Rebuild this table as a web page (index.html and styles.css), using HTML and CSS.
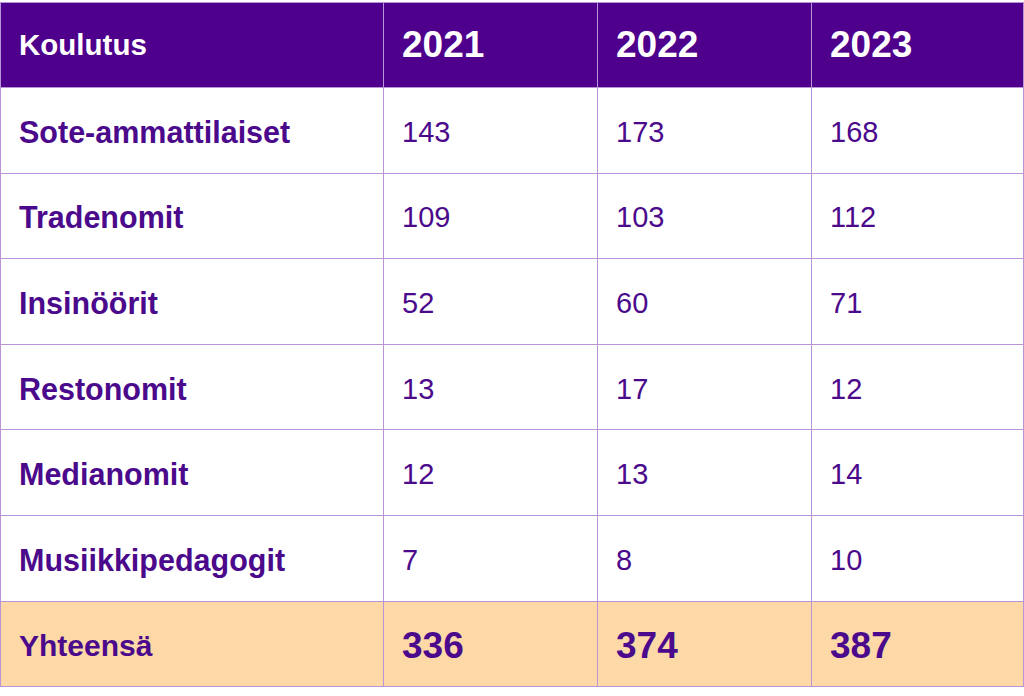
FILE: index.html
```html
<!DOCTYPE html>
<html lang="fi">
<head>
<meta charset="utf-8">
<title>Koulutus</title>
<link rel="stylesheet" href="styles.css">
</head>
<body>
<div class="page">
<table class="stats">
  <colgroup>
    <col class="c-label">
    <col class="c-year">
    <col class="c-year">
    <col class="c-year-last">
  </colgroup>
  <thead>
    <tr class="head">
      <th class="label">Koulutus</th>
      <th class="year">2021</th>
      <th class="year">2022</th>
      <th class="year">2023</th>
    </tr>
  </thead>
  <tbody>
    <tr><th class="label">Sote-ammattilaiset</th><td>143</td><td>173</td><td>168</td></tr>
    <tr><th class="label">Tradenomit</th><td>109</td><td>103</td><td>112</td></tr>
    <tr><th class="label">Insinöörit</th><td>52</td><td>60</td><td>71</td></tr>
    <tr><th class="label">Restonomit</th><td>13</td><td>17</td><td>12</td></tr>
    <tr><th class="label">Medianomit</th><td>12</td><td>13</td><td>14</td></tr>
    <tr><th class="label">Musiikkipedagogit</th><td>7</td><td>8</td><td>10</td></tr>
    <tr class="total"><th class="label">Yhteensä</th><td>336</td><td>374</td><td>387</td></tr>
  </tbody>
</table>
</div>
</body>
</html>
```
FILE: styles.css
```css
html, body {
  margin: 0;
  padding: 0;
  background: #ffffff;
}

.page {
  padding-top: 2px;
  width: 1024px;
}

.stats {
  width: 1023px;
  border-collapse: collapse;
  table-layout: fixed;
  font-family: "Liberation Sans", Arial, sans-serif;
  color: #4b0a8c;
}

.c-label { width: 383px; }
.c-year { width: 214px; }
.c-year-last { width: 212px; }

.stats th,
.stats td {
  border: 1px solid #b994d9;
  height: 85.6px;
  padding: 4px 0 0 18px;
  text-align: left;
  vertical-align: middle;
  box-sizing: border-box;
}

.stats td {
  font-size: 29px;
  font-weight: 400;
}

.stats th.label {
  font-size: 30.5px;
  font-weight: 700;
}

.head th {
  height: 85px;
  background: #4e008c;
  color: #ffffff;
  padding-top: 0;
}

.head th.label {
  font-size: 29.5px;
}

.head th.year {
  font-size: 37px;
  font-weight: 700;
}

.total th,
.total td {
  background: #fed9a8;
}

.total th.label {
  font-size: 30px;
}

.total td {
  font-size: 37px;
  font-weight: 700;
}
```
